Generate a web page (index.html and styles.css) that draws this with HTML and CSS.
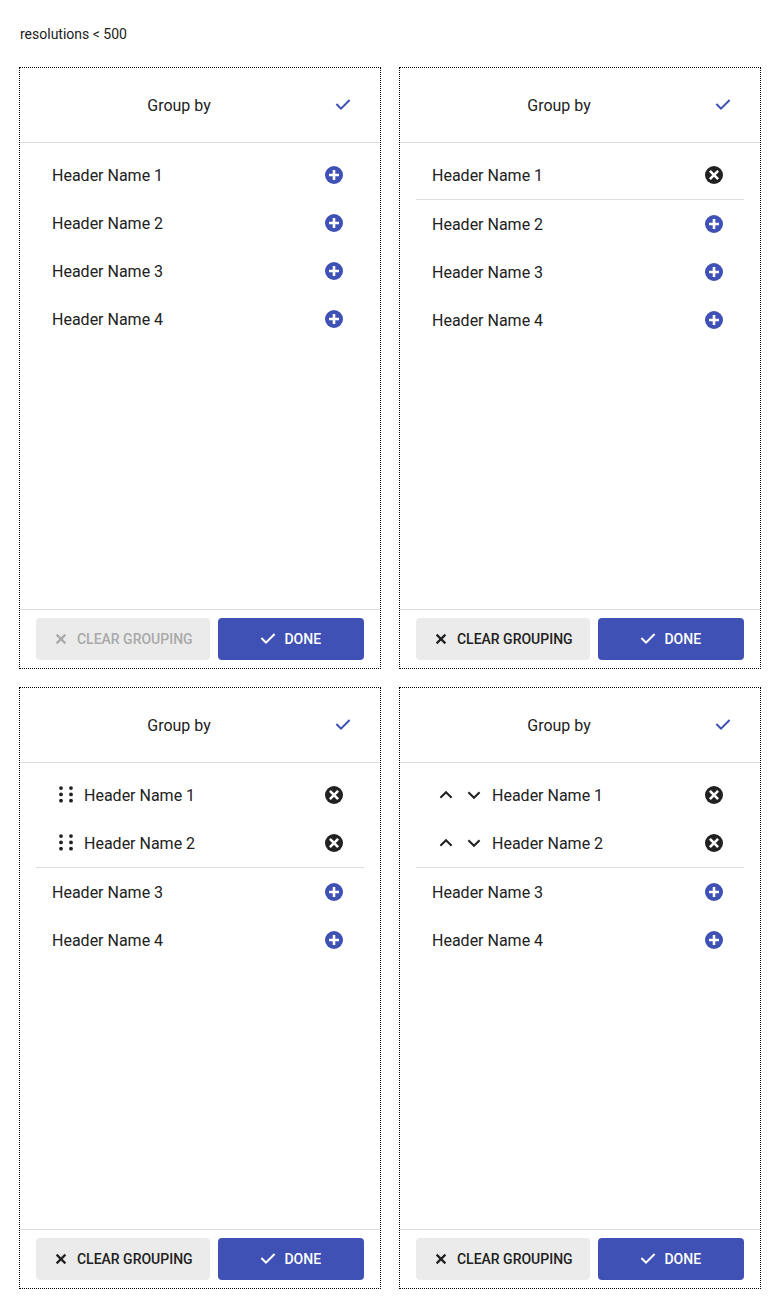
FILE: index.html
```html
<!DOCTYPE html>
<html lang="en">
<head>
<meta charset="utf-8">
<title>Group by</title>
<link rel="stylesheet" href="styles.css">
</head>
<body>
<svg class="sprite" aria-hidden="true">
  <symbol id="check" viewBox="0 0 20 20"><path d="M3.4 9 8 13.6 16.6 5" fill="none" stroke="currentColor" stroke-width="2"/></symbol>
  <symbol id="close" viewBox="0 0 20 20"><path d="M5.6 5.6 14.4 14.4M14.4 5.6 5.6 14.4" fill="none" stroke="currentColor" stroke-width="2.2"/></symbol>
  <symbol id="add" viewBox="0 0 20 20"><circle cx="10" cy="10" r="9" fill="currentColor"/><path d="M10 5V15M5 10H15" stroke="#fff" stroke-width="2.6"/></symbol>
  <symbol id="remove" viewBox="0 0 20 20"><circle cx="10" cy="10" r="9" fill="currentColor"/><path d="M5.9 5.9 14.1 14.1M14.1 5.9 5.9 14.1" stroke="#fff" stroke-width="2.6"/></symbol>
  <symbol id="drag" viewBox="0 0 20 20"><g fill="currentColor"><circle cx="5" cy="3.1" r="1.9"/><circle cx="15" cy="3.1" r="1.9"/><circle cx="5" cy="9.4" r="1.9"/><circle cx="15" cy="9.4" r="1.9"/><circle cx="5" cy="15.7" r="1.9"/><circle cx="15" cy="15.7" r="1.9"/></g></symbol>
  <symbol id="up" viewBox="0 0 20 20"><path d="M4.4 12.8 10 7.2 15.6 12.8" fill="none" stroke="currentColor" stroke-width="2"/></symbol>
  <symbol id="down" viewBox="0 0 20 20"><path d="M4.4 7.2 10 12.8 15.6 7.2" fill="none" stroke="currentColor" stroke-width="2"/></symbol>
</svg>
<h1 class="caption">resolutions &lt; 500</h1>
<main class="grid">
  <section class="panel">
    <header class="head"><span class="title">Group by</span><svg class="icon primary"><use href="#check"/></svg></header>
    <div class="list">
      <div class="row"><span class="name">Header Name 1</span><svg class="icon primary"><use href="#add"/></svg></div>
      <div class="row"><span class="name">Header Name 2</span><svg class="icon primary"><use href="#add"/></svg></div>
      <div class="row"><span class="name">Header Name 3</span><svg class="icon primary"><use href="#add"/></svg></div>
      <div class="row"><span class="name">Header Name 4</span><svg class="icon primary"><use href="#add"/></svg></div>
    </div>
    <footer class="foot">
      <button class="btn clear" disabled><svg class="icon"><use href="#close"/></svg>CLEAR GROUPING</button>
      <button class="btn done"><svg class="icon"><use href="#check"/></svg>DONE</button>
    </footer>
  </section>
  <section class="panel">
    <header class="head"><span class="title">Group by</span><svg class="icon primary"><use href="#check"/></svg></header>
    <div class="list">
      <div class="row"><span class="name">Header Name 1</span><svg class="icon"><use href="#remove"/></svg></div>
      <hr class="divider">
      <div class="row"><span class="name">Header Name 2</span><svg class="icon primary"><use href="#add"/></svg></div>
      <div class="row"><span class="name">Header Name 3</span><svg class="icon primary"><use href="#add"/></svg></div>
      <div class="row"><span class="name">Header Name 4</span><svg class="icon primary"><use href="#add"/></svg></div>
    </div>
    <footer class="foot">
      <button class="btn clear"><svg class="icon"><use href="#close"/></svg>CLEAR GROUPING</button>
      <button class="btn done"><svg class="icon"><use href="#check"/></svg>DONE</button>
    </footer>
  </section>
  <section class="panel">
    <header class="head"><span class="title">Group by</span><svg class="icon primary"><use href="#check"/></svg></header>
    <div class="list">
      <div class="row"><span class="tools"><svg class="icon"><use href="#drag"/></svg></span><span class="name">Header Name 1</span><svg class="icon"><use href="#remove"/></svg></div>
      <div class="row"><span class="tools"><svg class="icon"><use href="#drag"/></svg></span><span class="name">Header Name 2</span><svg class="icon"><use href="#remove"/></svg></div>
      <hr class="divider">
      <div class="row"><span class="name">Header Name 3</span><svg class="icon primary"><use href="#add"/></svg></div>
      <div class="row"><span class="name">Header Name 4</span><svg class="icon primary"><use href="#add"/></svg></div>
    </div>
    <footer class="foot">
      <button class="btn clear"><svg class="icon"><use href="#close"/></svg>CLEAR GROUPING</button>
      <button class="btn done"><svg class="icon"><use href="#check"/></svg>DONE</button>
    </footer>
  </section>
  <section class="panel">
    <header class="head"><span class="title">Group by</span><svg class="icon primary"><use href="#check"/></svg></header>
    <div class="list">
      <div class="row"><span class="tools"><svg class="icon"><use href="#up"/></svg><svg class="icon"><use href="#down"/></svg></span><span class="name">Header Name 1</span><svg class="icon"><use href="#remove"/></svg></div>
      <div class="row"><span class="tools"><svg class="icon"><use href="#up"/></svg><svg class="icon"><use href="#down"/></svg></span><span class="name">Header Name 2</span><svg class="icon"><use href="#remove"/></svg></div>
      <hr class="divider">
      <div class="row"><span class="name">Header Name 3</span><svg class="icon primary"><use href="#add"/></svg></div>
      <div class="row"><span class="name">Header Name 4</span><svg class="icon primary"><use href="#add"/></svg></div>
    </div>
    <footer class="foot">
      <button class="btn clear"><svg class="icon"><use href="#close"/></svg>CLEAR GROUPING</button>
      <button class="btn done"><svg class="icon"><use href="#check"/></svg>DONE</button>
    </footer>
  </section>
</main>
</body>
</html>
```
FILE: styles.css
```css
* { box-sizing: border-box; }

body {
  margin: 0;
  padding: 24px 20px 20px;
  background: #fff;
  color: #212121;
  font-family: Roboto, sans-serif;
  font-size: 16px;
}

.sprite { display: none; }

.caption {
  margin: 0 0 24px;
  font-size: 14px;
  font-weight: 400;
  line-height: 20px;
}

.grid {
  display: grid;
  grid-template-columns: 360px 360px;
  gap: 20px;
}

.panel {
  display: flex;
  flex-direction: column;
  height: 600px;
  outline: 1px dotted #000;
}

.icon {
  display: block;
  flex: none;
  width: 20px;
  height: 20px;
}

.primary { color: #3f51b5; }

.head {
  display: flex;
  align-items: center;
  height: 75px;
  padding: 0 27px 0 16px;
  border-bottom: 1px solid #dedede;
}

.title {
  flex: 1;
  padding-right: 11px;
  text-align: center;
}

.list {
  flex: 1;
  padding: 8px 16px;
}

.row {
  display: flex;
  align-items: center;
  height: 48px;
  padding: 0 20px 0 16px;
}

.name { flex: 1; }

.tools {
  display: flex;
  gap: 8px;
  padding: 0 8px 0 4px;
}

.divider {
  height: 1px;
  margin: 0;
  border: 0;
  background: #dedede;
}

.foot {
  display: flex;
  gap: 8px;
  padding: 8px 16px;
  border-top: 1px solid #dedede;
}

.btn {
  display: flex;
  align-items: center;
  justify-content: center;
  gap: 6px;
  height: 42px;
  padding: 0 2.4px 0 0;
  border: 0;
  border-radius: 4px;
  font: 500 14px/20px Roboto, sans-serif;
}

.clear {
  width: 174px;
  background: #ebebeb;
  color: #212121;
}

.clear:disabled { color: #a9a9a9; }

.done {
  width: 146px;
  background: #3f51b5;
  color: #fff;
}
```
